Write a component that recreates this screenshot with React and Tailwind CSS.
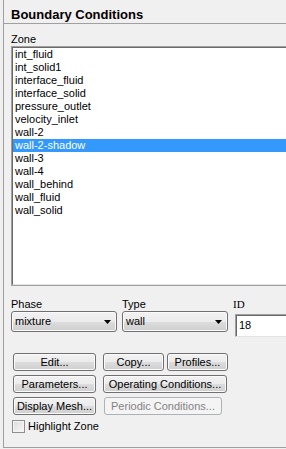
const zones = [
  "int_fluid",
  "int_solid1",
  "interface_fluid",
  "interface_solid",
  "pressure_outlet",
  "velocity_inlet",
  "wall-2",
  "wall-2-shadow",
  "wall-3",
  "wall-4",
  "wall_behind",
  "wall_fluid",
  "wall_solid"
];

const btn =
  "flex h-[18px] shrink-0 items-center justify-center rounded-[3px] border border-[#707070] bg-[linear-gradient(#f2f2f2_0%,#ebebeb_50%,#dddddd_50%,#cfcfcf_100%)] shadow-[inset_0_0_0_1px_#fbfbfb] leading-[13px] text-black";

const Arrow = () => (
  <svg width="7" height="4" viewBox="0 0 7 4" className="shrink-0">
    <polygon points="0,0 7,0 3.5,4" fill="#000" />
  </svg>
);

const Combo = ({ value }) => (
  <div className="flex h-[21px] w-[106px] items-center justify-between rounded-[3px] border border-[#707070] bg-[linear-gradient(#f2f2f2_0%,#ebebeb_50%,#dddddd_50%,#cfcfcf_100%)] pl-[3px] pr-[5px] shadow-[inset_0_0_0_1px_#fbfbfb]">
    <span className="leading-[13px]">{value}</span>
    <Arrow />
  </div>
);

export default function App() {
  return (
    <div className="h-[449px] w-[286px] overflow-hidden bg-[#f0f0f0] font-['Liberation_Sans',Arial,sans-serif] text-[11px] text-black">
      <div className="ml-[3px] h-[448px] w-[320px] border-b border-l border-[#a0a0a0]">
        <div className="h-[24px] border-b border-[#a0a0a0] pl-[7px] pt-[7px] text-[13px] font-bold leading-[15px]">
          Boundary Conditions
        </div>

        <div className="pl-[7px]">
          <div className="mt-[9px] leading-[13px]">Zone</div>

          <div className="h-[240px] w-[300px] border border-[#a0a0a0]">
            <div className="h-full border border-[#696969] border-b-[#e3e3e3] border-r-[#e3e3e3] bg-white">
              {zones.map((z) => (
                <div
                  key={z}
                  className={`h-[13px] pl-[2px] leading-[13px] ${
                    z === "wall-2-shadow" ? "bg-[#3399ff] text-white" : "text-black"
                  }`}
                >
                  {z}
                </div>
              ))}
            </div>
          </div>

          <div className="mt-[12px] flex">
            <div className="w-[111px]">
              <div className="leading-[13px]">Phase</div>
              <Combo value="mixture" />
            </div>
            <div className="w-[111px]">
              <div className="leading-[13px]">Type</div>
              <Combo value="wall" />
            </div>
            <div>
              <div className="font-['Liberation_Serif',serif] leading-[13px]">ID</div>
              <div className="ml-[2px] mt-[3px] flex h-[23px] w-[80px] items-center border border-[#a0a0a0] border-b-[#e3e3e3] border-r-[#e3e3e3] bg-white pl-[3px] shadow-[inset_1px_1px_0_#696969]">
                <span className="leading-[13px]">18</span>
              </div>
            </div>
          </div>

          <div className="ml-[2px] mt-[16px] flex flex-col gap-[4px]">
            <div className="flex">
              <div className={`${btn} w-[83px]`}>Edit...</div>
              <div className={`${btn} ml-[7px] w-[61px]`}>Copy...</div>
              <div className={`${btn} ml-[3px] w-[61px]`}>Profiles...</div>
            </div>
            <div className="flex">
              <div className={`${btn} w-[83px]`}>Parameters...</div>
              <div className={`${btn} ml-[7px] w-[124px]`}>Operating Conditions...</div>
            </div>
            <div className="flex">
              <div className={`${btn} w-[83px]`}>Display Mesh...</div>
              <div className="ml-[8px] flex h-[18px] w-[118px] items-center justify-center rounded-[3px] border border-[#adb2b5] bg-[#f4f4f4] leading-[13px] text-[#838383]">
                Periodic Conditions...
              </div>
            </div>
          </div>

          <div className="ml-[1px] mt-[5px] flex items-center gap-[3px]">
            <div className="h-[13px] w-[13px] border border-[#8f8f8f] bg-[linear-gradient(135deg,#dcdcdc,#f8f8f8)] shadow-[inset_0_0_0_1px_#f4f4f4]" />
            <span className="leading-[13px]">Highlight Zone</span>
          </div>
        </div>
      </div>
    </div>
  );
}
